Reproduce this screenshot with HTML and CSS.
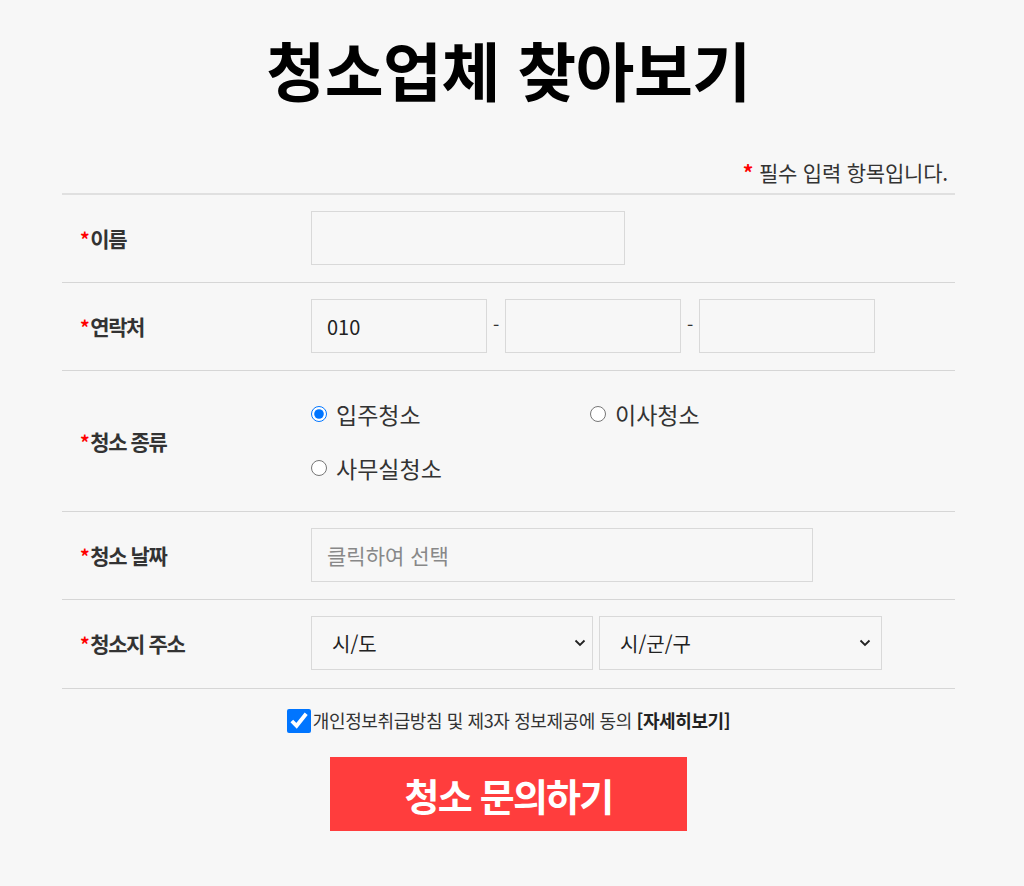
FILE: index.html
```html
<!DOCTYPE html>
<html lang="ko">
<head>
<meta charset="utf-8">
<title>청소업체 찾아보기</title>
<link rel="stylesheet" href="styles.css">
</head>
<body>
<div class="page">
  <h1 class="title">청소업체 찾아보기</h1>
  <p class="note"><span class="star">*</span> 필수 입력 항목입니다.</p>
  <div class="form">
    <div class="row">
      <div class="label"><span class="star">*</span>이름</div>
      <div class="field"><input class="box w-name" type="text"></div>
    </div>
    <div class="row">
      <div class="label"><span class="star">*</span>연락처</div>
      <div class="field phone">
        <input class="box w-phone" type="text" value="010">
        <span class="dash">-</span>
        <input class="box w-phone" type="text">
        <span class="dash">-</span>
        <input class="box w-phone" type="text">
      </div>
    </div>
    <div class="row row-radio">
      <div class="label"><span class="star">*</span>청소 종류</div>
      <div class="field radios">
        <label class="opt"><input type="radio" name="kind" checked>입주청소</label>
        <label class="opt"><input type="radio" name="kind">이사청소</label>
        <label class="opt"><input type="radio" name="kind">사무실청소</label>
      </div>
    </div>
    <div class="row">
      <div class="label"><span class="star">*</span>청소 날짜</div>
      <div class="field"><input class="box w-date" type="text" placeholder="클릭하여 선택"></div>
    </div>
    <div class="row row-last">
      <div class="label"><span class="star">*</span>청소지 주소</div>
      <div class="field selects">
        <div class="sel w-sel1"><span>시/도</span><svg class="chev" viewBox="0 0 12 8"><path d="M1.5 1.5 L6 6 L10.5 1.5" fill="none" stroke="#222" stroke-width="1.8"/></svg></div>
        <div class="sel w-sel2"><span>시/군/구</span><svg class="chev" viewBox="0 0 12 8"><path d="M1.5 1.5 L6 6 L10.5 1.5" fill="none" stroke="#222" stroke-width="1.8"/></svg></div>
      </div>
    </div>
  </div>
  <label class="agree"><input type="checkbox" checked><span>개인정보취급방침 및 제3자 정보제공에 동의 <b>[자세히보기]</b></span></label>
  <div class="actions"><button class="submit" type="button">청소 문의하기</button></div>
</div>
</body>
</html>
```

FILE: styles.css
```css
html, body {
  margin: 0;
  padding: 0;
  background: #f7f7f7;
}
body {
  font-family: "Noto Sans CJK KR", "Noto Sans", sans-serif;
  color: #333;
}
.page {
  width: 893px;
  margin-left: 62px;
}
.title {
  margin: 32px 0 0;
  font-size: 64px;
  line-height: 72px;
  font-weight: 700;
  color: #000;
  text-align: center;
  letter-spacing: -0.5px;
}
.note {
  margin: 56px 0 0;
  padding: 0 7px 9px 0;
  text-align: right;
  font-size: 21px;
  line-height: 24px;
  letter-spacing: -0.2px;
  color: #333;
}
.star {
  color: #f00;
  font-weight: 700;
}
.form {
  border-top: 2px solid #e0e0e0;
}
.row {
  display: flex;
  align-items: center;
  padding: 16px 0 17px;
  border-bottom: 1px solid #d6d6d6;
}
.row-radio {
  padding: 16px 0 16px;
}
.row-last {
  padding-bottom: 18px;
}
.label {
  width: 249px;
  padding-left: 18px;
  box-sizing: border-box;
  font-size: 21px;
  font-weight: 700;
  letter-spacing: -1.4px;
  color: #333;
}
.label .star {
  font-size: 19px;
  margin-right: 2px;
}
.field {
  display: flex;
  align-items: center;
}
.box {
  height: 54px;
  box-sizing: border-box;
  border: 1px solid #d9d9d9;
  background: transparent;
  padding: 0 15px;
  font-family: inherit;
  font-size: 20px;
  color: #222;
  outline: none;
  margin: 0;
}
.box::placeholder {
  color: #888;
  font-size: 21px;
}
.w-name { width: 314px; }
.w-phone { width: 176px; }
.w-date { width: 502px; }
.dash {
  width: 8px;
  margin: 0 4px 0 6px;
  font-size: 18px;
  color: #333;
  position: relative;
  top: -2px;
}
.radios {
  display: grid;
  grid-template-columns: 279px 200px;
  grid-auto-rows: 54px;
}
.opt {
  display: flex;
  align-items: center;
  font-size: 23px;
  color: #333;
}
.opt input {
  width: 16px;
  height: 16px;
  margin: 0 9px 0 0;
}
.selects {
  gap: 6px;
}
.sel {
  height: 54px;
  box-sizing: border-box;
  border: 1px solid #d9d9d9;
  display: flex;
  align-items: center;
  justify-content: space-between;
  padding: 0 6px 0 20px;
  font-size: 20px;
  color: #222;
}
.w-sel1 { width: 282px; }
.w-sel2 { width: 283px; }
.w-sel2 .chev { margin-right: 4px; }
.chev {
  width: 12px;
  height: 8px;
}
.agree {
  display: flex;
  align-items: center;
  justify-content: center;
  margin-top: 19px;
  font-size: 18px;
  letter-spacing: -0.4px;
  color: #333;
  line-height: 25px;
}
.agree b {
  font-weight: 700;
  color: #222;
}
.agree input {
  width: 24px;
  height: 24px;
  margin: 0 2px 0 0;
  accent-color: #0075ff;
}
.actions {
  display: flex;
  justify-content: center;
  margin-top: 24px;
}
.submit {
  width: 357px;
  height: 74px;
  border: 0;
  background: #ff3d3d;
  color: #fff;
  font-family: inherit;
  font-size: 38px;
  font-weight: 700;
  letter-spacing: -1.8px;
}
```
